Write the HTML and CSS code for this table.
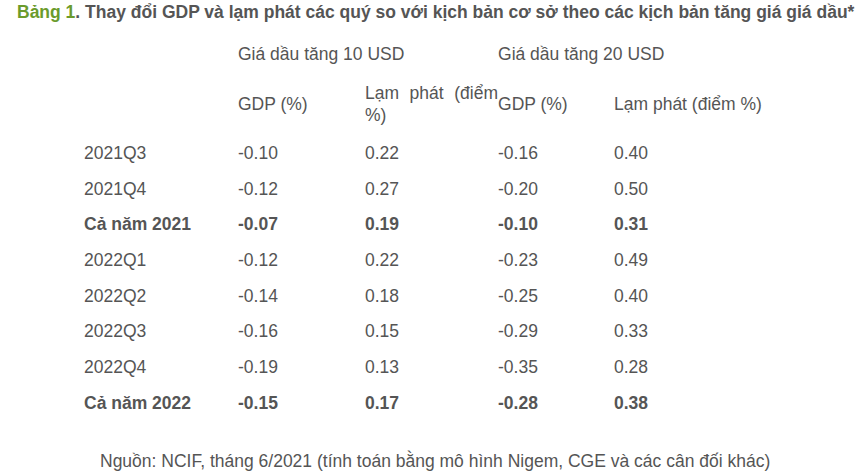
FILE: index.html
```html
<!DOCTYPE html>
<html lang="vi">
<head>
<meta charset="utf-8">
<link rel="stylesheet" href="styles.css">
</head>
<body>
<div class="page">
  <p class="title"><span class="label">Bảng 1</span>. Thay đổi GDP và lạm phát các quý so với kịch bản cơ sở theo các kịch bản tăng giá giá dầu*</p>
  <table class="data">
    <colgroup>
      <col class="c1"><col class="c2"><col class="c3"><col class="c4"><col class="c5">
    </colgroup>
    <tr class="h1"><td></td><td colspan="2">Giá dầu tăng 10 USD</td><td colspan="2">Giá dầu tăng 20 USD</td></tr>
    <tr class="h2"><td></td><td>GDP (%)</td><td class="just">Lạm phát (điểm %)</td><td>GDP (%)</td><td>Lạm phát (điểm %)</td></tr>
    <tr><td>2021Q3</td><td>-0.10</td><td>0.22</td><td>-0.16</td><td>0.40</td></tr>
    <tr><td>2021Q4</td><td>-0.12</td><td>0.27</td><td>-0.20</td><td>0.50</td></tr>
    <tr class="b"><td>Cả năm 2021</td><td>-0.07</td><td>0.19</td><td>-0.10</td><td>0.31</td></tr>
    <tr><td>2022Q1</td><td>-0.12</td><td>0.22</td><td>-0.23</td><td>0.49</td></tr>
    <tr><td>2022Q2</td><td>-0.14</td><td>0.18</td><td>-0.25</td><td>0.40</td></tr>
    <tr><td>2022Q3</td><td>-0.16</td><td>0.15</td><td>-0.29</td><td>0.33</td></tr>
    <tr><td>2022Q4</td><td>-0.19</td><td>0.13</td><td>-0.35</td><td>0.28</td></tr>
    <tr class="b"><td>Cả năm 2022</td><td>-0.15</td><td>0.17</td><td>-0.28</td><td>0.38</td></tr>
  </table>
  <p class="source">Nguồn: NCIF, tháng 6/2021 (tính toán bằng mô hình Nigem, CGE và các cân đối khác)</p>
</div>
</body>
</html>
```
FILE: styles.css
```css
html, body {
  margin: 0;
  padding: 0;
  background: #ffffff;
}
.page {
  font-family: "Liberation Sans", Arial, sans-serif;
  color: #555555;
  font-size: 17.5px;
  padding: 0 0 0 17px;
}
.title {
  margin: 0;
  padding-top: 2px;
  font-weight: bold;
  font-size: 17.5px;
  line-height: 20px;
}
.label {
  color: #6b9b2c;
}
.data {
  border-collapse: collapse;
  table-layout: fixed;
  margin: 13px 0 0 67px;
  width: 686px;
}
.c1 { width: 154px; }
.c2 { width: 127px; }
.c3 { width: 133px; }
.c4 { width: 116px; }
.c5 { width: 156px; }
.data td {
  padding: 0;
  vertical-align: middle;
  line-height: 22px;
  height: 35.7px;
}
.h1 td {
  height: 38px;
}
.h2 td {
  height: 62px;
}
.just {
  text-align: justify;
}
.b td {
  font-weight: bold;
}
.source {
  margin: 29px 0 0 83px;
  line-height: 22px;
}
```
